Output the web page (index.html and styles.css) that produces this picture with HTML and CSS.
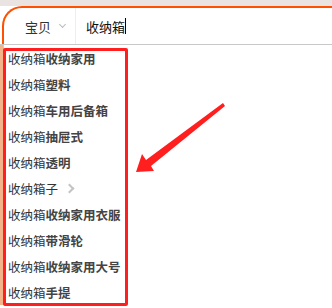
FILE: index.html
```html
<!DOCTYPE html>
<html lang="zh-CN">
  <head>
    <meta charset="UTF-8" />
    <title>收纳箱</title>
    <link rel="stylesheet" href="styles.css">
  </head>
  <body>
    <div class="topbar"></div>
    <div class="search">
      <div class="scope">宝贝<span class="caret"></span></div>
      <div class="query">收纳箱<span class="cursor"></span></div>
    </div>
    <div class="panel">
      <div class="side"></div>
      <ul class="suggest">
        <li>收纳箱<b>收纳家用</b></li>
        <li>收纳箱<b>塑料</b></li>
        <li>收纳箱<b>车用后备箱</b></li>
        <li>收纳箱<b>抽屉式</b></li>
        <li>收纳箱<b>透明</b></li>
        <li>收纳箱子<span class="more"></span></li>
        <li>收纳箱<b>收纳家用衣服</b></li>
        <li>收纳箱<b>带滑轮</b></li>
        <li>收纳箱<b>收纳家用大号</b></li>
        <li>收纳箱<b>手提</b></li>
      </ul>
      <div class="mark"></div>
      <svg class="arrow" width="332" height="308" viewBox="0 0 332 308">
        <polygon points="136,172 142,154 146,160 223,103 225,106 151,166 154,171" fill="#ff1f1f"/>
      </svg>
    </div>
  </body>
</html>
```
FILE: styles.css
```css
body {
  margin: 0;
  padding: 0;
  background: #fff;
  font-family: "Noto Sans CJK SC", "Liberation Sans", sans-serif;
  font-size: 13px;
  color: #333;
  width: 332px;
  height: 308px;
  overflow: hidden;
}
.topbar {
  height: 6px;
  background: #e9e4e1;
}
.search {
  display: flex;
  align-items: center;
  height: 38px;
  margin-left: 2px;
  border-top: 2px solid #ff5000;
  border-left: 2px solid #ff5000;
  border-radius: 20px 0 0 0;
  box-sizing: border-box;
}
.scope {
  display: flex;
  align-items: center;
  width: 72px;
  height: 100%;
  padding-left: 21px;
  box-sizing: border-box;
  border-right: 1px solid #eee;
  color: #333;
}
.caret {
  width: 4px;
  height: 4px;
  margin-left: 9px;
  margin-top: -3px;
  border-right: 1px solid #bbb;
  border-bottom: 1px solid #bbb;
  transform: rotate(45deg);
}
.query {
  display: flex;
  align-items: center;
  padding-left: 10px;
  color: #111;
}
.cursor {
  width: 1px;
  height: 16px;
  background: #000;
}
.panel {
  position: relative;
  display: flex;
  border-top: 1px solid #c8c8c8;
}
.side {
  width: 3px;
  background: #f4b48a;
  border-right: 1px solid #ccc;
}
.suggest {
  margin: 0;
  padding: 0 0 0 4px;
  list-style: none;
  font-size: 12.5px;
}
.suggest li {
  display: flex;
  align-items: center;
  height: 26px;
  color: #333;
}
.suggest b {
  color: #444;
}
.more {
  width: 5px;
  height: 5px;
  margin-left: 8px;
  border-top: 2px solid #c4c4c4;
  border-right: 2px solid #c4c4c4;
  transform: rotate(45deg);
}
.mark {
  position: absolute;
  left: 3px;
  top: 3px;
  width: 125px;
  height: 258px;
  border: 3px solid #ff1f1f;
  border-radius: 2px;
  box-sizing: border-box;
}
.arrow {
  position: absolute;
  left: 0;
  top: -45px;
}
```
